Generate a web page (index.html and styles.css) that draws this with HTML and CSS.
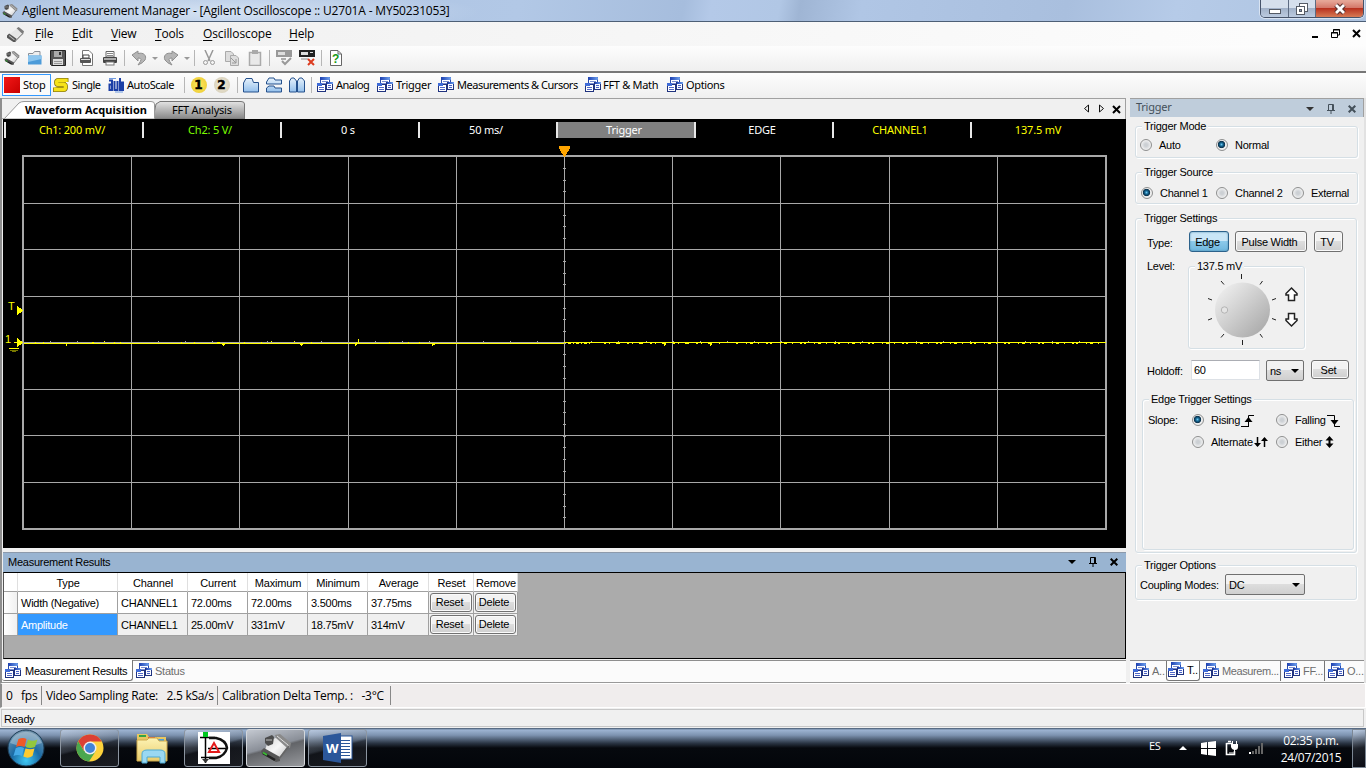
FILE: index.html
```html
<!DOCTYPE html>
<html lang="en">
<head>
<meta charset="utf-8">
<title>Agilent Measurement Manager</title>
<link rel="stylesheet" href="styles.css">
</head>
<body>
<svg class="defs" width="0" height="0">
  <defs>
    <linearGradient id="blue" x1="0" y1="0" x2="0" y2="1"><stop offset="0" stop-color="#e6f1fb"/><stop offset="1" stop-color="#94c0ec"/></linearGradient>
    <linearGradient id="winb" x1="0" y1="0" x2="1" y2="0"><stop offset="0" stop-color="#1c3fb0"/><stop offset="1" stop-color="#6ea0ee"/></linearGradient>
    <linearGradient id="metal" x1="0" y1="0" x2="1" y2="1"><stop offset="0" stop-color="#d2d2d2"/><stop offset=".5" stop-color="#f6f6f6"/><stop offset="1" stop-color="#bdbdbd"/></linearGradient>
    <linearGradient id="knob" x1="0" y1="0" x2="1" y2="1"><stop offset="0.1" stop-color="#eee"/><stop offset="1" stop-color="#a2a2a2"/></linearGradient>
    <radialGradient id="orb" cx=".5" cy=".85" r=".8"><stop offset="0" stop-color="#3fc8f4"/><stop offset=".5" stop-color="#1a6ba5"/><stop offset="1" stop-color="#6f93ad"/></radialGradient>
    <linearGradient id="fold" x1="0" y1="0" x2="0" y2="1"><stop offset="0" stop-color="#fdf3b4"/><stop offset="1" stop-color="#e9cc6c"/></linearGradient>
    <symbol id="device" viewBox="0 0 32 32">
      <path d="M8 9 21 4 29 12 18 27 5 18Z" fill="url(#metal)"/>
      <path d="M15 3 20 2 31 11 30 16 26 15 16 6Z" fill="#8a8a8a"/>
      <path d="M17 4 28 13 29 15" fill="none" stroke="#ddd"/>
      <path d="M1 19 4 16 20 25 20 29 16 30 2 22Z" fill="#555"/>
      <path d="M3 21 15 28" stroke="#222" stroke-width="2.500"/>
      <path d="M3 20.500 7 23" stroke="#3bbb35" stroke-width="2"/>
      <path d="M5 6 12 3 14 5 13 12 8 14 5 11Z" fill="#4c4c4c"/><path d="M6 8H12" stroke="#bbb"/>
      <path d="M29 14 19 27" stroke="#666" stroke-width="1.500"/>
    </symbol>
    <symbol id="scroll" viewBox="0 0 16 16">
      <path d="M3 7 10 2 14 6 8 12Z" fill="#e6e6e6"/>
      <path d="M9 2 11 1 16 5 15 8Z" fill="#7b7b7b"/>
      <path d="M0 9 2 7 9 12 8 15 6 15 0 11Z" fill="#555"/>
      <path d="M2 9 7 13" stroke="#bbb"/><path d="M15 7 8 14" stroke="#888"/>
    </symbol>
    <symbol id="panes" viewBox="0 0 16 16">
      <rect x="3.500" y=".5" width="9" height="9" fill="#fff" stroke="#2c4aa8"/><rect x="3" y="0" width="10" height="3" rx="1" fill="url(#winb)"/>
      <path d="M5 4.500h6M5 6.500h6" stroke="#7a8ed2"/>
      <rect x="9.500" y="5.500" width="6" height="7" fill="#f7f9ff" stroke="#20337f"/><rect x="10" y="5" width="6" height="2" fill="url(#winb)"/>
      <path d="M11 8.500h3M11 10.500h3" stroke="#4961c4"/>
      <rect x=".5" y="7.500" width="8" height="7" fill="#fff" stroke="#20337f"/><rect x="0" y="6" width="5" height="3" fill="#3f6cd8"/>
      <path d="M2 10.500h5M2 12.500h5" stroke="#5168c8"/>
    </symbol>
    <symbol id="drop" viewBox="0 0 8 4"><path d="M0 0H8L4 4Z"/></symbol>
    <symbol id="pin" viewBox="0 0 8 10"><path d="M1.500 6V.5H6.500V6M5.500 0V6M0 6.500H8M4 7V10" fill="none" stroke="currentColor"/></symbol>
    <symbol id="cross" viewBox="0 0 8 8"><path d="M.7.7 7.300 7.300M7.300.7.7 7.300" stroke="currentColor" stroke-width="2"/></symbol>
  </defs>
</svg>

<header class="titlebar">
  <svg class="app-icon" width="16" height="16"><use href="#device"/></svg>
  <h1 class="window-title">Agilent Measurement Manager - [Agilent Oscilloscope :: U2701A - MY50231053]</h1>
  <div class="window-controls">
    <span class="wc wc-min"><svg width="14" height="8"><rect x="1.500" y="2.500" width="11" height="4" fill="#fff" stroke="#555b66"/></svg></span>
    <span class="wc wc-max"><svg width="14" height="13"><rect x="4.500" y="1.500" width="8" height="8" fill="#fff" stroke="#555b66"/><rect x="1.500" y="4.500" width="8" height="8" fill="#fff" stroke="#555b66"/><rect x="4.500" y="7.500" width="2" height="2" fill="#8c9bb4" stroke="#555b66"/></svg></span>
    <span class="wc wc-close"><svg width="14" height="12"><path d="M3 2 11 10M11 2 3 10" stroke="#5a3230" stroke-width="5"/><path d="M3 2 11 10M11 2 3 10" stroke="#fff" stroke-width="2.800"/></svg></span>
  </div>
</header>

<nav class="menubar">
  <svg class="menu-icon" width="17" height="17"><use href="#scroll"/></svg>
  <span class="m m-file"><u>F</u>ile</span><span class="m m-edit"><u>E</u>dit</span><span class="m m-view"><u>V</u>iew</span><span class="m m-tools"><u>T</u>ools</span><span class="m m-osc"><u>O</u>scilloscope</span><span class="m"><u>H</u>elp</span>
  <svg class="mdi" width="50" height="12"><path d="M0 9h6" stroke="#000" stroke-width="2"/><path d="M21.500 4V1.500H27.500V7H25M19.500 4.500H25.500V9.500H19.500ZM19 5H26M21 2H28" fill="none" stroke="#000"/><path d="M41 2 48 9M48 2 41 9" stroke="#000" stroke-width="2"/></svg>
</nav>

<div class="toolbar tools">
  <span class="t"><svg width="16" height="16"><use href="#device"/></svg></span>
  <span class="t"><svg width="16" height="16"><path d="M1.500 13V3.500H6L7.500 1.500H13V13Z" fill="#eee" stroke="#8a8f96"/><path d="M1 5.500H14.500V14.500H1Z" fill="#4c9bd9"/><path d="M1 5.500H14.500V9L1 12Z" fill="#8cc5ee"/></svg></span>
  <span class="t"><svg width="16" height="16"><path d="M.5.5H15.500V15.500H1.500L.5 14.500Z" fill="#555" stroke="#222"/><rect x="4" y="1" width="8" height="6" fill="#aaa"/><rect x="9" y="2" width="2" height="3" fill="#333"/><rect x="3" y="9" width="10" height="6" fill="#ddd"/><path d="M4 11.500h8M4 13.500h8" stroke="#999"/></svg></span>
  <i class="sep"></i>
  <span class="t"><svg width="16" height="16"><path d="M3.500.5H10L13.500 4V15.500H3.500Z" fill="#fff" stroke="#777"/><path d="M4 5H10V8H4Z" fill="#fff" stroke="#444"/><rect x="1" y="8" width="11" height="5" rx="1" fill="#555"/><rect x="2" y="9" width="9" height="1" fill="#ddd"/></svg></span>
  <span class="t"><svg width="16" height="16"><path d="M4 1.500H12V7H4Z" fill="#fff" stroke="#666"/><path d="M5 3.500h6M5 5.500h6" stroke="#888"/><rect x="1" y="7" width="14" height="6" rx="1" fill="#444"/><rect x="2" y="8" width="12" height="2" fill="#aaa"/><rect x="4" y="12" width="8" height="3" fill="#fff" stroke="#777"/></svg></span>
  <i class="sep"></i>
  <span class="t"><svg width="16" height="16"><path d="M1 5 7 1V3.500C13 2 16 6 14 10Q12 13 7 15 10 11 10 9.500 9 7.500 7 8V11Z" fill="#b5b5b5" stroke="#8f8f8f"/></svg></span><span class="arrow"></span>
  <span class="t"><svg width="16" height="16"><path d="M15 5 9 1V3.500C3 2 0 6 2 10Q4 13 9 15 6 11 6 9.500 7 7.500 9 8V11Z" fill="#b5b5b5" stroke="#8f8f8f"/></svg></span><span class="arrow"></span>
  <i class="sep"></i>
  <span class="t"><svg width="16" height="16" fill="none" stroke="#999"><path d="M4 0 9 11M12 0 7 11" stroke-width="1.500"/><circle cx="4.500" cy="12.500" r="2"/><circle cx="11.500" cy="12.500" r="2"/></svg></span>
  <span class="t"><svg width="16" height="16" fill="#ddd" stroke="#aaa"><path d="M1.500 1.500H7L9.500 4V11.500H1.500Z"/><path d="M6.500 5.500H12L14.500 8V15.500H6.500Z"/><path d="M7 8 12 13M12 9V13H8" fill="none" stroke="#999"/></svg></span>
  <span class="t"><svg width="16" height="16"><path d="M2.500 2.500H13.500V15.500H2.500Z" fill="#e9e9e9" stroke="#aaa" stroke-width="1.500"/><rect x="5" y="0" width="6" height="4" fill="#aaa"/></svg></span>
  <i class="sep"></i>
  <span class="t"><svg width="16" height="16"><rect x="0" y="0" width="16" height="7" fill="#999"/><rect x="2" y="2" width="7" height="3" fill="#ddd"/><path d="M5 8H10V10H5Z" fill="#aaa"/><path d="M6 11 9 14 15 8" fill="none" stroke="#999" stroke-width="2"/></svg></span>
  <span class="t"><svg width="16" height="16"><rect x="0" y="0" width="16" height="7" fill="#222"/><rect x="2" y="2" width="7" height="3" fill="#ddd"/><rect x="11" y="2" width="3" height="1" fill="#ddd"/><path d="M2 9H9" stroke="#888"/><path d="M9 9 15 15M15 9 9 15" stroke="#dc3c20" stroke-width="2"/></svg></span>
  <i class="sep"></i>
  <span class="t"><svg width="16" height="16"><path d="M2.500.5H10L13.500 4V15.500H2.500Z" fill="#fff" stroke="#666"/><path d="M10 1V4H13" fill="none" stroke="#666"/><text x="4" y="13" class="q">?</text></svg></span>
</div>

<div class="toolbar scope-tools">
  <span class="s stop"><i class="red"></i>Stop</span>
  <span class="s single"><svg width="16" height="16"><path d="M13 5V3.500H5.500Q3.500 3.500 3.500 5.500T5.500 7.500H10.500Q12.500 7.500 12.500 10T10.500 12.500H2.500V10.500" fill="none" stroke="#8d7d10" stroke-width="5"/><path d="M13 5V3.500H5.500Q3.500 3.500 3.500 5.500T5.500 7.500H10.500Q12.500 7.500 12.500 10T10.500 12.500H2.500V10.500" fill="none" stroke="#f7e318" stroke-width="3.400"/></svg>Single</span>
  <span class="s auto"><svg width="16" height="16" fill="none" stroke="#1b3fa6" stroke-width="2"><path d="M1 3.500H4V14M4 7.500H1.500V13H4M6.500 4V13H9.500M9.500 4V14M12 1V13H13M11 5H13M14 5.500H15.500V13H14Z"/><path d="M1 1.500H8M7 15H15" stroke="#6f9be0" stroke-width="1"/></svg>AutoScale</span>
  <i class="sep"></i>
  <span class="t"><b class="ch ch-1">1</b></span><span class="t"><b class="ch ch-2">2</b></span>
  <i class="sep sep-b"></i>
  <span class="t"><svg width="16" height="16"><path d="M.5 15V6L3 1.500H9L10.500 5.500H15.500V15Z" fill="url(#blue)" stroke="#24508c"/></svg></span>
  <span class="t"><svg width="16" height="16"><path d="M.5 7V5L3 1H8L9 3H15.500V7ZM.5 15V11L3 9H8L9 11H15.500V15Z" fill="url(#blue)" stroke="#24508c"/></svg></span>
  <span class="t"><svg width="16" height="16"><path d="M.5 15V4L2.500 1H5L7.500 4V15ZM8.500 15V4L10.500 1H13L15.500 4V15Z" fill="url(#blue)" stroke="#24508c"/></svg></span>
  <i class="sep sep-c"></i>
  <span class="p p-analog"><svg width="16" height="16"><use href="#panes"/></svg>Analog</span>
  <span class="p p-trigger"><svg width="16" height="16"><use href="#panes"/></svg>Trigger</span>
  <span class="p p-meas"><svg width="16" height="16"><use href="#panes"/></svg>Measurements &amp; Cursors</span>
  <span class="p p-fft"><svg width="16" height="16"><use href="#panes"/></svg>FFT &amp; Math</span>
  <span class="p p-opt"><svg width="16" height="16"><use href="#panes"/></svg>Options</span>
</div>

<main class="workspace">
  <div class="left">
    <div class="doc-tabs">
      <svg class="tab-shape" width="250" height="20">
        <defs><linearGradient id="tg" x1="0" y1="0" x2="0" y2="1"><stop offset="0" stop-color="#e4e4e4"/><stop offset="1" stop-color="#858585"/></linearGradient></defs>
        <path d="M151 19.500 154 5 158 2.500H239Q242.500 2.500 242.500 5V20H151Z" fill="url(#tg)" stroke="#777"/>
        <path d="M0 20H2L17 4Q19 2.500 22 2.500H149Q152.500 2.500 152.500 5V20Z" fill="#fff" stroke="#999"/>
      </svg>
      <span class="tab-active">Waveform Acquisition</span><span class="tab-idle">FFT Analysis</span>
      <svg class="tab-nav" width="40" height="12"><path d="M5.500 2V9L1.500 5.500ZM16.500 2V9L20.500 5.500Z" fill="none" stroke="#111"/><path d="M30 3 37 10M37 3 30 10" stroke="#000" stroke-width="2"/></svg>
    </div>

    <section class="scope">
      <div class="readouts">
        <span class="r yel">Ch1: 200 mV/</span><span class="r grn">Ch2: 5 V/</span><span class="r">0 s</span><span class="r">50 ms/</span><span class="r r-trig">Trigger</span><span class="r">EDGE</span><span class="r yel">CHANNEL1</span><span class="r yel">137.5 mV</span>
      </div>
      <svg class="plot" width="1123" height="409" viewBox="3 139 1123 409" shape-rendering="crispEdges">
        <g stroke="#a8a8a8" fill="none">
          <path d="M131.500 156V529M239.500 156V529M348.500 156V529M456.500 156V529M564.500 156V529M672.500 156V529M780.500 156V529M889.500 156V529M997.500 156V529"/>
          <path d="M23 203.500H1106M23 249.500H1106M23 296.500H1106M23 342.500H1106M23 389.500H1106M23 435.500H1106M23 482.500H1106"/>
          <path d="M564.500 168V529" stroke-width="3" stroke-dasharray="1 10.640"/>
          <path d="M50 341.500H1106" stroke-dasharray="1 26.070"/>
          <rect x="23" y="156" width="1083" height="373" stroke-width="2"/>
        </g>
        <g stroke="#ff0" fill="none">
          <path d="M24 343.500H564"/>
          <path d="M564 342.500H1106"/>
          <path d="M35 342.500h1M43 342.500h1M92 342.500h2M104 341.500h1M114 342.500h1M120 342.500h1M181 342.500h1M194 342.500h1M217 342.500h3M244 342.500h1M261 342.500h1M271 341.500h1M294 341.500h1M311 342.500h1M389 342.500h1M408 342.500h1M419 342.500h1"/>
          <path d="M66.500 343V346M67 343.500h2M222 344.500h3M223.500 343V346M300 344.500h3M301.500 343V346M355.500 343V346M356.500 342V345M358.500 339V343M432.500 343V346M433 344.500h2"/>
          <path d="M568 343.500H590" stroke-dasharray="3 2 1 2"/><path d="M604 343.500H720" stroke-dasharray="2 3 1 6 4 7"/><path d="M736 343.500H1106" stroke-dasharray="2 8 1 3 3 5 1 7 2 2"/>
          <path d="M664.500 343V346M666 344.500h-2M710.500 343V346M711.500 343V345"/>
        </g>
        <path d="M559 146H570V148L565 157H564L559 148Z" fill="#ffa500"/>
        <path d="M17 305.500 23 310.500 17 315.500ZM14 342H17V338L23 342.500 17 347.500V343H14Z" fill="#ff0"/>
        <path d="M9 348.500H19" stroke="#ff0"/><path d="M10 350.500H18M12 351.500H16" stroke="#777700"/>
        <text x="8" y="310" class="mark">T</text><text x="5" y="343" class="mark">1</text>
      </svg>
    </section>

    <section class="results">
      <div class="results-head"><span>Measurement Results</span>
        <div class="ctl"><svg width="8" height="4"><use href="#drop"/></svg><svg width="8" height="10"><use href="#pin"/></svg><svg width="8" height="8"><use href="#cross"/></svg></div>
      </div>
      <div class="results-body">
        <div class="grid">
          <span class="h"></span><span class="h">Type</span><span class="h">Channel</span><span class="h">Current</span><span class="h">Maximum</span><span class="h">Minimum</span><span class="h">Average</span><span class="h">Reset</span><span class="h">Remove</span>
          <span class="rh"></span><span>Width (Negative)</span><span>CHANNEL1</span><span>72.00ms</span><span>72.00ms</span><span>3.500ms</span><span>37.75ms</span><span class="bc"><button class="btn">Reset</button></span><span class="bc"><button class="btn">Delete</button></span>
          <span class="rh"></span><span class="sel">Amplitude</span><span class="alt">CHANNEL1</span><span class="alt">25.00mV</span><span class="alt">331mV</span><span class="alt">18.75mV</span><span class="alt">314mV</span><span class="bc"><button class="btn">Reset</button></span><span class="bc"><button class="btn">Delete</button></span>
        </div>
      </div>
    </section>
    <div class="bottom-tabs">
      <span class="bt bt-on"><svg width="16" height="16"><use href="#panes"/></svg>Measurement Results</span><span class="bt"><svg width="16" height="16"><use href="#panes"/></svg>Status</span>
    </div>
  </div>

  <aside class="panel">
    <div class="panel-head"><span>Trigger</span>
      <div class="ctl"><svg width="8" height="4"><use href="#drop"/></svg><svg width="8" height="10"><use href="#pin"/></svg><svg width="8" height="8"><use href="#cross"/></svg></div>
    </div>
    <div class="panel-body">
      <div class="group g-mode"><h2>Trigger Mode</h2>
        <div class="radios"><label><i class="radio"></i>Auto</label><label><i class="radio on"></i>Normal</label></div>
      </div>
      <div class="group g-source"><h2>Trigger Source</h2>
        <div class="radios"><label><i class="radio on"></i>Channel 1</label><label><i class="radio"></i>Channel 2</label><label><i class="radio"></i>External</label></div>
      </div>
      <div class="group g-settings"><h2>Trigger Settings</h2>
        <div class="type-row"><span class="lab">Type:</span><button class="btn edge">Edge</button><button class="btn pulse">Pulse Width</button><button class="btn tv">TV</button></div>
        <div class="level-row"><span class="lab">Level:</span>
          <div class="group level"><h2>137.5 mV</h2>
            <svg class="dial" width="112" height="72" viewBox="1191 275 112 72">
              <path d="M1241.500 275V280M1242.500 341V346M1221 282 1224 285.500M1262.500 282 1260 285.500M1208 299.500 1212 301M1276 299.500 1272 301M1208 321 1212 319.500M1276 321 1272 319.500M1221 338.500 1224 335M1262.500 338.500 1260 335" stroke="#222" fill="none"/>
              <circle cx="1242.500" cy="311" r="27.500" fill="url(#knob)"/>
              <circle cx="1224.500" cy="311" r="3.200" fill="#e4e4e4" stroke="#b4b4b4"/>
              <path d="M1291.500 289 1297 294.500V296H1294.500V301.500H1288.500V296H1286V294.500ZM1291.500 327 1297 321.500V320H1294.500V314.500H1288.500V320H1286V321.500Z" fill="#fff" stroke="#222" stroke-width="1.500"/>
            </svg>
          </div>
        </div>
        <div class="hold-row"><span class="lab">Holdoff:</span><span class="input">60</span><span class="select ns">ns<svg width="8" height="4"><use href="#drop"/></svg></span><button class="btn set">Set</button></div>
        <div class="group g-edge"><h2>Edge Trigger Settings</h2>
          <div class="slopes"><span class="lab">Slope:</span>
            <label><i class="radio on"></i>Rising<svg width="14" height="14"><path d="M0 12.500H7.500M7.500 13V1.500H13" fill="none" stroke="#000"/><path d="M3.500 8 7.500 3 11.500 8Z"/></svg></label>
            <label><i class="radio"></i>Falling<svg width="14" height="14"><path d="M0 1.500H7.500V12.500H13" fill="none" stroke="#000"/><path d="M3.500 6 7.500 11 11.500 6Z"/></svg></label>
            <span></span>
            <label><i class="radio"></i>Alternate<svg class="near" width="14" height="12"><path d="M3.500 1V10M10.500 2V11" stroke="#000" stroke-width="1.500"/><path d="M0 7H7L3.500 11ZM7 5H14L10.500 1Z"/></svg></label>
            <label><i class="radio"></i>Either<svg class="far" width="9" height="12"><path d="M4.500 2V10" stroke="#000" stroke-width="2"/><path d="M.5 4.500H8.500L4.500 0ZM.5 7.500H8.500L4.500 12Z"/></svg></label>
          </div>
        </div>
      </div>
      <div class="group g-options"><h2>Trigger Options</h2>
        <div class="coupling"><span>Coupling Modes:</span><span class="select dc">DC<svg width="8" height="4"><use href="#drop"/></svg></span></div>
      </div>
    </div>
    <div class="side-tabs">
      <span class="st st-a"><svg width="16" height="16"><use href="#panes"/></svg>A..</span><span class="st st-t"><svg width="16" height="16"><use href="#panes"/></svg>T..</span><span class="st st-m"><svg width="16" height="16"><use href="#panes"/></svg>Measurem...</span><span class="st st-f"><svg width="16" height="16"><use href="#panes"/></svg>FF...</span><span class="st st-o"><svg width="16" height="16"><use href="#panes"/></svg>O...</span>
    </div>
  </aside>
</main>

<div class="status"><span class="c1">0&nbsp;&nbsp; fps</span><span class="c2">Video Sampling Rate:&nbsp;&nbsp; 2.5 kSa/s</span><span class="c3">Calibration Delta Temp. :&nbsp;&nbsp; -3°C</span></div>
<div class="ready">Ready</div>

<footer class="taskbar">
  <span class="start"><svg width="40" height="40"><circle cx="20" cy="20" r="18" fill="url(#orb)" stroke="#1d3c55"/><path d="M4 15A17 17 0 0 1 36 15Q20 22 4 15Z" fill="#fff" opacity=".3"/><path d="M12.500 11Q17 9 20.500 11L18.500 19Q14 17 10 19Z" fill="#ef5a28"/><path d="M22 11.500Q26 14 31.500 11.500L29 19Q24 21 19.800 19Z" fill="#93c83e"/><path d="M9.700 20.300Q14 18 18 20L16 28Q12 26 7.500 28Z" fill="#45a9e6"/><path d="M19.500 20.500Q24 22 28.500 20.500L26.500 28Q22 31 17.300 28.500Z" fill="#fecb2f"/></svg></span>
  <span class="task tk-chrome"><svg width="30" height="30"><circle cx="15" cy="15" r="13.500" fill="#fdd23c"/><path d="M3.300 8.200A13.500 13.500 0 0 0 14 28.500L20.500 18.500 15 15 9 18Z" fill="#4aa74e"/><path d="M3.300 8.200 9.200 18 15 8.500H26.800A13.500 13.500 0 0 0 3.300 8.200Z" fill="#dc4033"/><circle cx="15" cy="15" r="6.500" fill="#eee"/><circle cx="15" cy="15" r="5" fill="#4283d6"/></svg></span>
  <span class="explorer"><svg width="34" height="32"><path d="M2 2H12L14 5H31V28H2Z" fill="#e8c65f"/><path d="M4 3H11V5H4Z" fill="#35a443"/><path d="M13 5H20V7H13Z" fill="#e65b31"/><path d="M22 7H29V9H22Z" fill="#4b9fdc"/><path d="M2 8H12L14 6H22L24 9H32V29H2Z" fill="url(#fold)" stroke="#cda94d"/><path d="M7 31V22Q7 18 12 18H25Q30 18 30 22V31H25V25H12V31Z" fill="#9ad8f2" stroke="#4faad2"/></svg></span>
  <span class="task tk-daq"><svg width="32" height="32"><rect width="32" height="32" fill="#fff"/><path d="M2 5.500H17M3 25.500H18M7.500 3V31M10 16.500H29" stroke="#000" stroke-width="1.500"/><path d="M11 6H18Q28 8 29 16Q27 24 18 26H11" fill="none" stroke="#111" stroke-width="2.500"/><rect x="5" y="0" width="5" height="5" fill="#00c820"/><path d="M11 20 16 11 21 20Z" fill="none" stroke="#e31b1b" stroke-width="2"/><path d="M4 27 7.500 31 11 27Z" fill="#333"/></svg></span>
  <span class="task tk-agilent"><svg width="34" height="32"><use href="#device"/></svg></span>
  <span class="task tk-word"><svg width="32" height="32"><rect x="14" y="4" width="16" height="23" fill="#fff" stroke="#2b579a"/><path d="M18 8.500H28M18 11.500H28M18 14.500H28M18 17.500H28M18 20.500H28M18 23.500H28" stroke="#2b579a"/><path d="M1 4 19 1V31L1 28Z" fill="#2b579a"/><text x="4" y="21" class="w">W</text></svg></span>
  <div class="tray">
    <span class="lang">ES</span>
    <svg class="up" width="8" height="4"><path d="M0 4H8L4 0Z" fill="#fff"/></svg>
    <svg class="win" width="15" height="15"><path d="M0 2 6 1V7H0ZM7 1 15 0V7H7ZM0 8H6V14L0 13ZM7 8H15V15L7 14Z" fill="#fff"/></svg>
    <svg class="plug" width="14" height="16"><path d="M1.500 3.500H7M1.500 3V14.500H9.500V11M3 1.500H6" fill="none" stroke="#fff" stroke-width="1.600"/><path d="M6 4H13V7Q13 10 10 10T6 7ZM7 1H8V4H7ZM11 1H12V4H11Z" fill="#fff"/><path d="M9.500 9V13H4" fill="none" stroke="#fff"/></svg>
    <svg class="signal" width="15" height="12"><path d="M0 9H2V11H0Z" fill="#fff"/><path d="M3 8H5V11H3ZM6 6H8V11H6ZM9 3H11V11H9ZM12 0H14V11H12Z" fill="#666"/></svg>
    <div class="clock"><span>02:35 p.m.</span><span>24/07/2015</span></div>
    <span class="desk"></span>
  </div>
</footer>
</body>
</html>
```

FILE: styles.css
```css
* { box-sizing: border-box; }
html, body { margin: 0; padding: 0; }
body { width: 1366px; height: 768px; overflow: hidden; display: flex; flex-direction: column; background: #f0f0f0; color: #000; font: 11px/14px "Liberation Sans", Arial, sans-serif; letter-spacing: -0.25px; white-space: nowrap; }
svg { display: block; flex: none; }
h1, h2 { margin: 0; font-weight: normal; }
.defs { position: absolute; }

.titlebar { flex: none; height: 22px; display: flex; align-items: flex-start; padding-left: 1px; border-bottom: 1px solid #4d5f76; background: radial-gradient(ellipse 260px 24px at 220px 12px, rgba(226,236,248,.75), rgba(226,236,248,0)), linear-gradient(100deg, #a9c0df 0, #b2c8e6 38%, #a6bddd 50%, #b4c9e8 52%, #b1c7e5 57%, #9fb5d4 58.500%, #b0c6e5 63%, #a9bfde 78%, #b6cbe8 86%, #adc3e0 100%); }
.app-icon { margin: 3px 4px 0 1px; }
.window-title { font: 12px/20px "Open Sans", "Noto Sans", sans-serif; letter-spacing: -0.18px; margin-top: 1px; flex: 1; }
.window-controls { display: flex; height: 18px; width: 104px; margin-right: 2px; border: 1px solid #46536a; border-top: 0; border-radius: 0 0 5px 5px; overflow: hidden; box-shadow: 0 0 0 1px rgba(255,255,255,.5); }
.wc { display: flex; align-items: center; justify-content: center; background: linear-gradient(#d5dfec 45%, #a2b2c9 50%, #bccbe0); border-right: 1px solid #5d6b82; }
.wc-min { width: 28px; padding-top: 5px; }
.wc-max { width: 27px; padding-bottom: 1px; }
.wc-close { flex: 1; border: 0; background: linear-gradient(#e6a697 5%, #d4786a 45%, #b83220 50%, #d77b55); }

.menubar { flex: none; height: 24px; display: flex; align-items: center; font: 12px/20px "Open Sans", "Noto Sans", sans-serif; letter-spacing: -0.2px; background: linear-gradient(90deg, #f0f0f0, #fdfdfd); }
.menu-icon { margin: 1px 11px 0 7px; }
.m-file { width: 37px; } .m-edit { width: 39px; } .m-view { width: 44px; } .m-tools { width: 48px; } .m-osc { width: 86px; letter-spacing: -0.1px; }
.menubar u { text-underline-offset: 2px; }
.mdi { margin: 0 4px 1px auto; }

.toolbar { flex: none; display: flex; align-items: center; background: linear-gradient(#fdfdfd, #efefef); }
.tools { height: 27px; border-bottom: 2px solid #777; padding-bottom: 1px; }
.t { width: 23px; display: flex; justify-content: center; }
.sep { width: 1px; height: 16px; background: #b6b6b6; margin: 0 2px 0 3px; }
.arrow { width: 9px; display: flex; justify-content: center; }
.arrow::before { content: ""; border: 3px solid transparent; border-top-color: #999; margin-top: 3px; }
.q { font: bold 12px "Liberation Sans", sans-serif; fill: #159a15; letter-spacing: 0; }
.scope-tools { height: 25px; font: 11px/16px "Noto Sans", sans-serif; letter-spacing: -0.48px; padding: 0 0 1px 2px; }
.s, .p { display: flex; align-items: center; }
.stop { width: 49px; height: 22px; border: 1px solid #3399ff; gap: 3px; padding-left: 1px; background: #fafafa; letter-spacing: -0.25px; }
.red { width: 16px; height: 16px; background: linear-gradient(135deg, #f31818, #c80000); }
.single { width: 55px; padding-left: 2px; gap: 3px; letter-spacing: -0.5px; }
.auto { width: 75px; gap: 3px; padding-left: 2px; letter-spacing: -0.45px; }
.ch { width: 16px; height: 16px; border-radius: 50%; text-align: center; font: bold 12px/16px "DejaVu Sans", sans-serif; letter-spacing: 0; -webkit-text-stroke: .5px #000; }
.ch-1 { background: radial-gradient(#ffe95e, #e9c72e); }
.ch-2 { background: radial-gradient(#f3ecd8, #d0c9b4); }
.scope-tools .t { height: 16px; }
.scope-tools .sep-b { margin: 0 1px 0 4px; }
.scope-tools .sep-c { margin-right: 3px; }
.p { gap: 3px; padding-left: 2px; }
.p-analog { width: 60px; } .p-trigger { width: 61px; letter-spacing: -0.3px; } .p-meas { width: 147px; } .p-fft { width: 82px; letter-spacing: -0.3px; gap: 2px; } .p-opt { letter-spacing: -0.35px; }

.workspace { flex: none; height: 585px; display: flex; gap: 4px; }
.left { width: 1126px; border-left: 2px solid #8e8e8e; display: flex; flex-direction: column; }
.doc-tabs { height: 21px; position: relative; display: flex; align-items: center; border-top: 1px solid #a0a0a0; border-right: 1px solid #a0a0a0; font: 11px/16px "Noto Sans", sans-serif; }
.tab-shape { position: absolute; left: 0; top: 0; }
.tab-active, .tab-idle { position: relative; padding-top: 1px; }
.tab-active { padding-left: 23px; width: 170px; font-weight: bold; letter-spacing: 0.05px; }
.tab-idle { letter-spacing: -0.2px; }
.tab-nav { margin: 0 2px 0 auto; }
.scope { height: 429px; margin-left: 1px; background: #000; }
.readouts { height: 20px; padding: 3px 0 0 1px; display: flex; font: 11px/15px "Noto Sans", sans-serif; letter-spacing: -0.2px; color: #fff; }
.r { width: 138px; height: 16px; border-left: 2px solid #e8e8e8; text-align: center; padding-right: 4px; line-height: 16px; }
.r-trig { background: #808080; }
.yel { color: #ff0; } .grn { color: #7cfc00; }
.mark { font: 11px "Liberation Sans", sans-serif; fill: #ff0; }

.results { margin: 4px 0 0 1px; height: 107px; }
.results-head { height: 20px; background: #99b4d1; border-top: 1px solid #8d9aab; padding: 0 8px 1px 5px; display: flex; align-items: center; justify-content: space-between; }
.ctl { display: flex; align-items: center; gap: 13px; }
.results-body { height: 87px; background: #ababab; border: 1px solid #000; border-left-color: #555; }
.grid { display: grid; width: 514px; grid-template-columns: 14px 100px 70px 60px 60px 60px 61px 45px 44px; grid-template-rows: 19px 22px 22px; }
.grid > span { background: #fff; border-right: 1px solid #a0a0a0; border-bottom: 1px solid #a0a0a0; padding-left: 3px; line-height: 22px; overflow: hidden; }
.grid > .h { line-height: 21px; text-align: center; padding-left: 1px; border-right-color: #dfdfdf; letter-spacing: -0.15px; }
.grid > .rh { background: linear-gradient(90deg, #fff, #f0f0f0); }
.grid > .alt { background: #f0f0f0; }
.grid > .sel { background: #3399ff; color: #fff; }
.grid > .bc { padding: 1px; background: #f0f0f0; }
.btn { font: inherit; letter-spacing: inherit; color: #000; padding: 0; border: 1px solid #707070; border-radius: 3px; background: linear-gradient(#f2f2f2 45%, #ddd 50%, #cfcfcf); box-shadow: inset 0 0 0 1px #fafafa; text-align: center; display: block; }
.bc .btn { width: 100%; height: 19px; line-height: 17px; padding-right: 3px; }

.bottom-tabs { margin-top: 1px; height: 23px; border-top: 1px solid #8e8e8e; border-bottom: 1px solid #999; background: #fbfbfb; display: flex; }
.bt { display: flex; align-items: center; gap: 3px; color: #6d6d6d; height: 20px; padding-left: 3px; }
.bt-on { color: #000; background: #fff; width: 131px; padding-top: 1px; border-right: 1px solid #777; border-bottom: 1px solid #777; border-radius: 0 0 3px 3px; margin-top: -1px; height: 21px; gap: 4px; }

.panel { width: 236px; display: flex; flex-direction: column; border-right: 2px solid #e2e2e2; }
.panel-head { height: 19px; background: #bfcddb; border-top: 1px solid #a0a0a0; border-right: 1px solid #a0a0a0; color: #44505a; padding: 0 7px 1px 6px; display: flex; align-items: center; justify-content: space-between; font: 11px/16px "Noto Sans", sans-serif; }
.panel-head span { margin-top: -1px; }
.panel-head .ctl { fill: #333; margin-top: 2px; }
.panel-body { flex: 1; padding: 9px 0 0 5px; }
.group { border: 1px solid #d5dfe5; border-radius: 3px; box-shadow: inset 1px 1px #fff, 1px 1px #fff; }
.group > h2 { font-size: 11px; line-height: 14px; width: max-content; margin: -8px 0 0 6px; padding: 0 2px; background: #f0f0f0; }
.g-mode { width: 223px; height: 32px; }
.g-source { width: 223px; height: 32px; margin-top: 14px; }
.g-settings { width: 222px; height: 335px; margin-top: 14px; }
.g-options { width: 222px; height: 35px; margin-top: 12px; }
.radios { display: grid; grid-template-columns: 76px 76px auto; padding: 5px 0 0 4px; }
.g-source .radios { padding-top: 7px; padding-left: 5px; letter-spacing: -0.3px; }
.g-source .radios { grid-template-columns: 75px 76px auto; }
label { display: flex; align-items: center; }
.radio { width: 12px; height: 12px; margin-right: 7px; border-radius: 50%; border: 1px solid #8e8f8f; background: radial-gradient(#ccd0d4 20%, #f4f4f4 75%); flex: none; }
.radio.on { background: radial-gradient(circle at 45% 45%, #6dc6f0 0, #12648f 22%, #0d3049 43%, #eee 52%); }
.lab { width: 42px; }
.type-row { display: flex; align-items: center; height: 21px; margin: 6px 0 0 11px; }
.type-row .lab { padding-top: 2px; }
.type-row .btn { height: 21px; }
.edge { width: 40px; margin-right: 6px; }
.btn.edge { background: linear-gradient(#c9e6f7 45%, #8cc9ea 50%, #6fb7de); border-color: #2c628b; box-shadow: inset 0 0 2px #4d88a8; padding-right: 3px; }
.pulse { width: 72px; margin-right: 7px; padding-right: 3px; } .tv { width: 29px; padding-right: 3px; }
.level-row { display: flex; margin: 7px 0 0 11px; }
.level { width: 117px; height: 83px; margin-top: 7px; margin-left: -1px; }
.level > h2 { margin-left: 6px; }
.dial { margin: 1px 0 0 2px; }
.hold-row { display: flex; align-items: center; height: 21px; margin: 11px 0 0 11px; }
.input { width: 69px; height: 20px; margin: -1px 6px 0 2px; border: 1px solid #dde1e6; border-top-color: #abadb3; background: #fff; padding-left: 2px; line-height: 18px; }
.select { display: flex; align-items: center; justify-content: space-between; border: 1px solid #707070; border-radius: 2px; background: linear-gradient(#f2f2f2 45%, #ddd 50%, #cfcfcf); height: 21px; padding: 0 4px 0 3px; }
.ns { width: 38px; margin-right: 7px; } .set { width: 38px; height: 19px; padding-right: 3px; margin-top: -2px; }
.g-edge { margin: 18px 0 0 6px; width: 212px; height: 151px; }
.slopes { display: grid; grid-template-columns: 44px 84px auto; row-gap: 2px; padding: 4px 0 0 5px; }
.slopes label { height: 20px; }
.slopes .lab { line-height: 20px; }
.slopes svg { margin-left: 1px; margin-top: 2px; }
.slopes .near { margin-left: 1px; margin-top: 0; } .slopes .far { margin-left: 3px; margin-top: 0; }
.coupling { display: flex; align-items: center; gap: 5px; margin: 2px 0 0 4px; }
.coupling > span:first-child { width: 80px; }
.dc { width: 80px; }
.side-tabs { height: 23px; border-top: 1px solid #8e8e8e; border-bottom: 1px solid #999; background: #fbfbfb; display: flex; overflow: hidden; }
.st { display: flex; align-items: center; gap: 3px; height: 20px; color: #6d6d6d; padding-left: 3px; }
.st-a { width: 36px; } .st-t { width: 34px; margin-top: -1px; height: 21px; padding-left: 1px; background: #fff; color: #000; border: 1px solid #777; border-top: 0; border-radius: 0 0 3px 3px; }
.st-m { width: 80px; letter-spacing: -0.4px; } .st-f { width: 44px; border-left: 1px solid #777; } .st-o { border-left: 1px solid #777; }

.status { flex: none; height: 25px; display: flex; align-items: center; border: 1px solid #fff; border-left: 2px solid #8e8e8e; background: #f0eded; font: 12px/18px "Open Sans", "Noto Sans", sans-serif; letter-spacing: -0.28px; }
.status > span { height: 19px; line-height: 19px; border-right: 1px solid #888; padding-left: 4px; }
.c1 { width: 40px; } .c2 { width: 176px; } .c3 { width: 173px; }
.ready { flex: none; height: 18px; margin: 1px 2px 1px 1px; border: 1px solid #c8c8c8; padding-left: 2px; line-height: 18px; }

.taskbar { flex: none; height: 40px; display: flex; align-items: center; background: linear-gradient(#42536a 0, #9db4d2 5%, #7d93b0 18%, #2a3544 38%, #06090e 50%, #03050a 100%); }
.start { margin: 0 13px 0 6px; }
.task { width: 59px; height: 38px; border: 1px solid #8c95a0; border-radius: 3px; display: flex; align-items: center; justify-content: center; background: linear-gradient(165deg, rgba(210,220,235,.5), rgba(110,120,135,.35) 45%, rgba(30,32,38,.5) 50%, rgba(50,52,58,.5)); }
.explorer { width: 65px; display: flex; justify-content: center; }
.tk-chrome { margin-left: 1px; }
.tk-agilent { margin-left: 3px; border-color: #d5d8dc; background: linear-gradient(165deg, #c4c9d1, #8a8f98 45%, #626468 50%, #97999d); }
.tk-word { margin-left: 3px; }
.w { font: bold 13px "Open Sans", sans-serif; fill: #fff; letter-spacing: 0; }
.tray { margin-left: auto; height: 40px; display: flex; align-items: center; color: #fff; font: 12px/17px "Open Sans", "Noto Sans", sans-serif; letter-spacing: -0.3px; }
.lang { font-size: 11px; width: 30px; padding-bottom: 5px; }
.up { margin-right: 14px; } .win { margin-right: 9px; } .plug { margin-right: 10px; } .signal { margin-right: 8px; margin-top: 2px; }
.clock { width: 78px; margin-right: 2px; display: flex; flex-direction: column; text-align: center; padding-top: 2px; }
.desk { width: 14px; height: 39px; border: 1px solid #7c8794; background: linear-gradient(160deg, rgba(220,230,245,.5), rgba(50,55,65,.5) 50%, rgba(20,20,30,.5)); }
```
